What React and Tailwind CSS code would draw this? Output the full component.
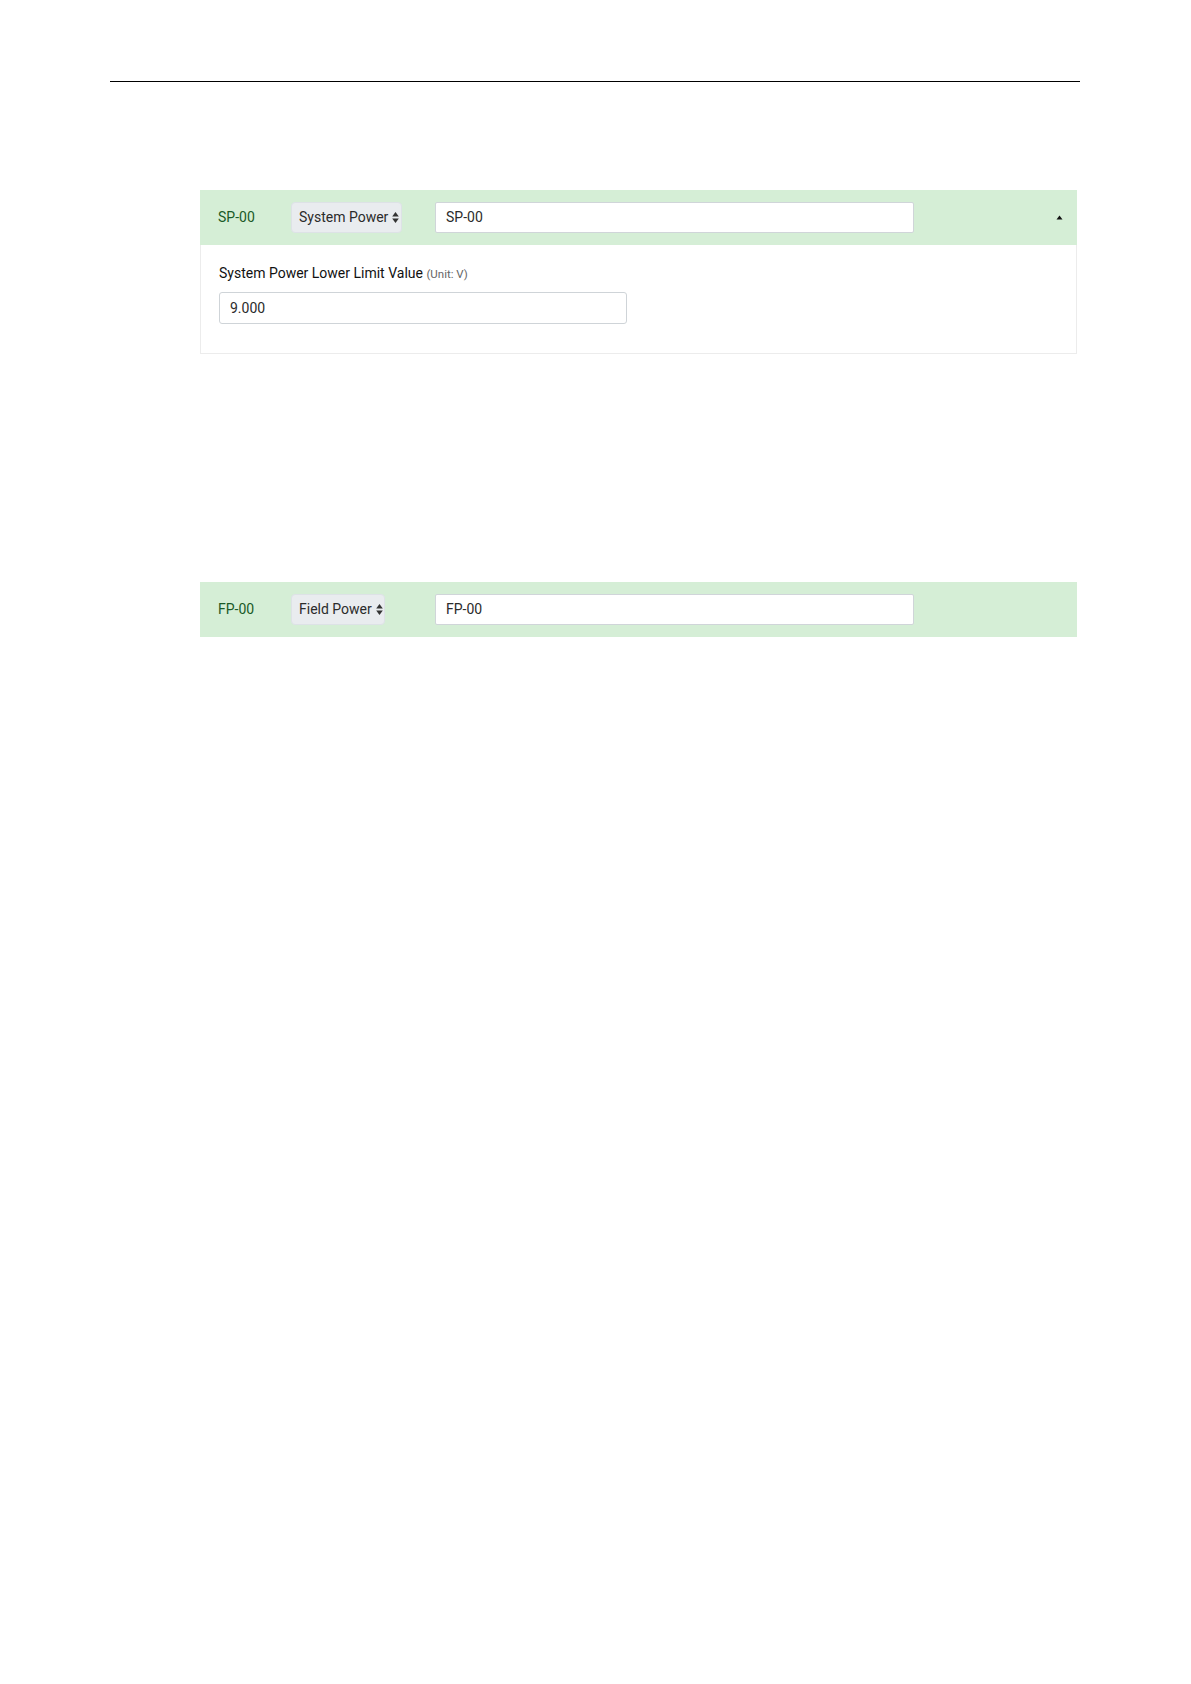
import React from "react";

const font = { fontFamily: "Roboto, 'Liberation Sans', sans-serif" };

const SortArrows = () => (
  <svg width="7" height="13" viewBox="0 0 7 13" className="ml-[4px] shrink-0">
    <path d="M3.5 1 L6.8 5.5 L0.2 5.5 Z" fill="#333" />
    <path d="M3.5 12 L6.8 7.5 L0.2 7.5 Z" fill="#333" />
  </svg>
);

const PanelHeader = ({ code, type, selectW, open }) => (
  <div className="flex items-center h-[55px] bg-[#d5eed6] pl-[18px] pr-[17px]">
    <span className="w-[73px] shrink-0 text-[14px] text-[#1a5a27]">{code}</span>
    <div className="w-[144px] shrink-0">
      <div
        className={`flex items-center whitespace-nowrap h-[31px] ${selectW} pl-[7px] rounded-[4px] bg-[#e9ecef] border border-[#dde2e6] text-[14px] text-[#2b2b2b]`}
      >
        {type}
        <SortArrows />
      </div>
    </div>
    <div className="flex items-center h-[31px] w-[479px] shrink-0 bg-white border border-[#d0d5d9] rounded-[2px] pl-[10px] text-[14px] text-[#2b2b2b]">
      {code}
    </div>
    {open && (
      <svg width="7" height="5" viewBox="0 0 7 5" className="ml-auto mr-[-3px]">
        <path d="M3.5 0.5 L6.5 4.5 L0.5 4.5 Z" fill="#111" />
      </svg>
    )}
  </div>
);

export default function App() {
  return (
    <div className="min-h-[1684px] bg-white" style={font}>
      {/* page rule */}
      <div className="pt-[81px] pl-[110px]">
        <div className="w-[970px] border-t border-black" />
      </div>

      {/* SP-00 panel */}
      <div className="mt-[108px] ml-[200px] w-[877px]">
        <PanelHeader code="SP-00" type="System Power" selectW="w-[111px]" open />
        <div className="h-[109px] border border-t-0 border-[#ececec] pl-[18px] pt-[19px]">
          <div className="text-[14px] text-[#111] leading-[18px]">
            System Power Lower Limit Value{" "}
            <span className="text-[11.5px] text-[#666]">(Unit: V)</span>
          </div>
          <div className="mt-[9px] flex items-center h-[32px] w-[408px] border border-[#cfd4d8] rounded-[3px] pl-[10px] text-[14px] text-[#2b2b2b]">
            9.000
          </div>
        </div>
      </div>

      {/* FP-00 panel */}
      <div className="mt-[228px] ml-[200px] w-[877px]">
        <PanelHeader code="FP-00" type="Field Power" selectW="w-[94px]" />
      </div>
    </div>
  );
}
